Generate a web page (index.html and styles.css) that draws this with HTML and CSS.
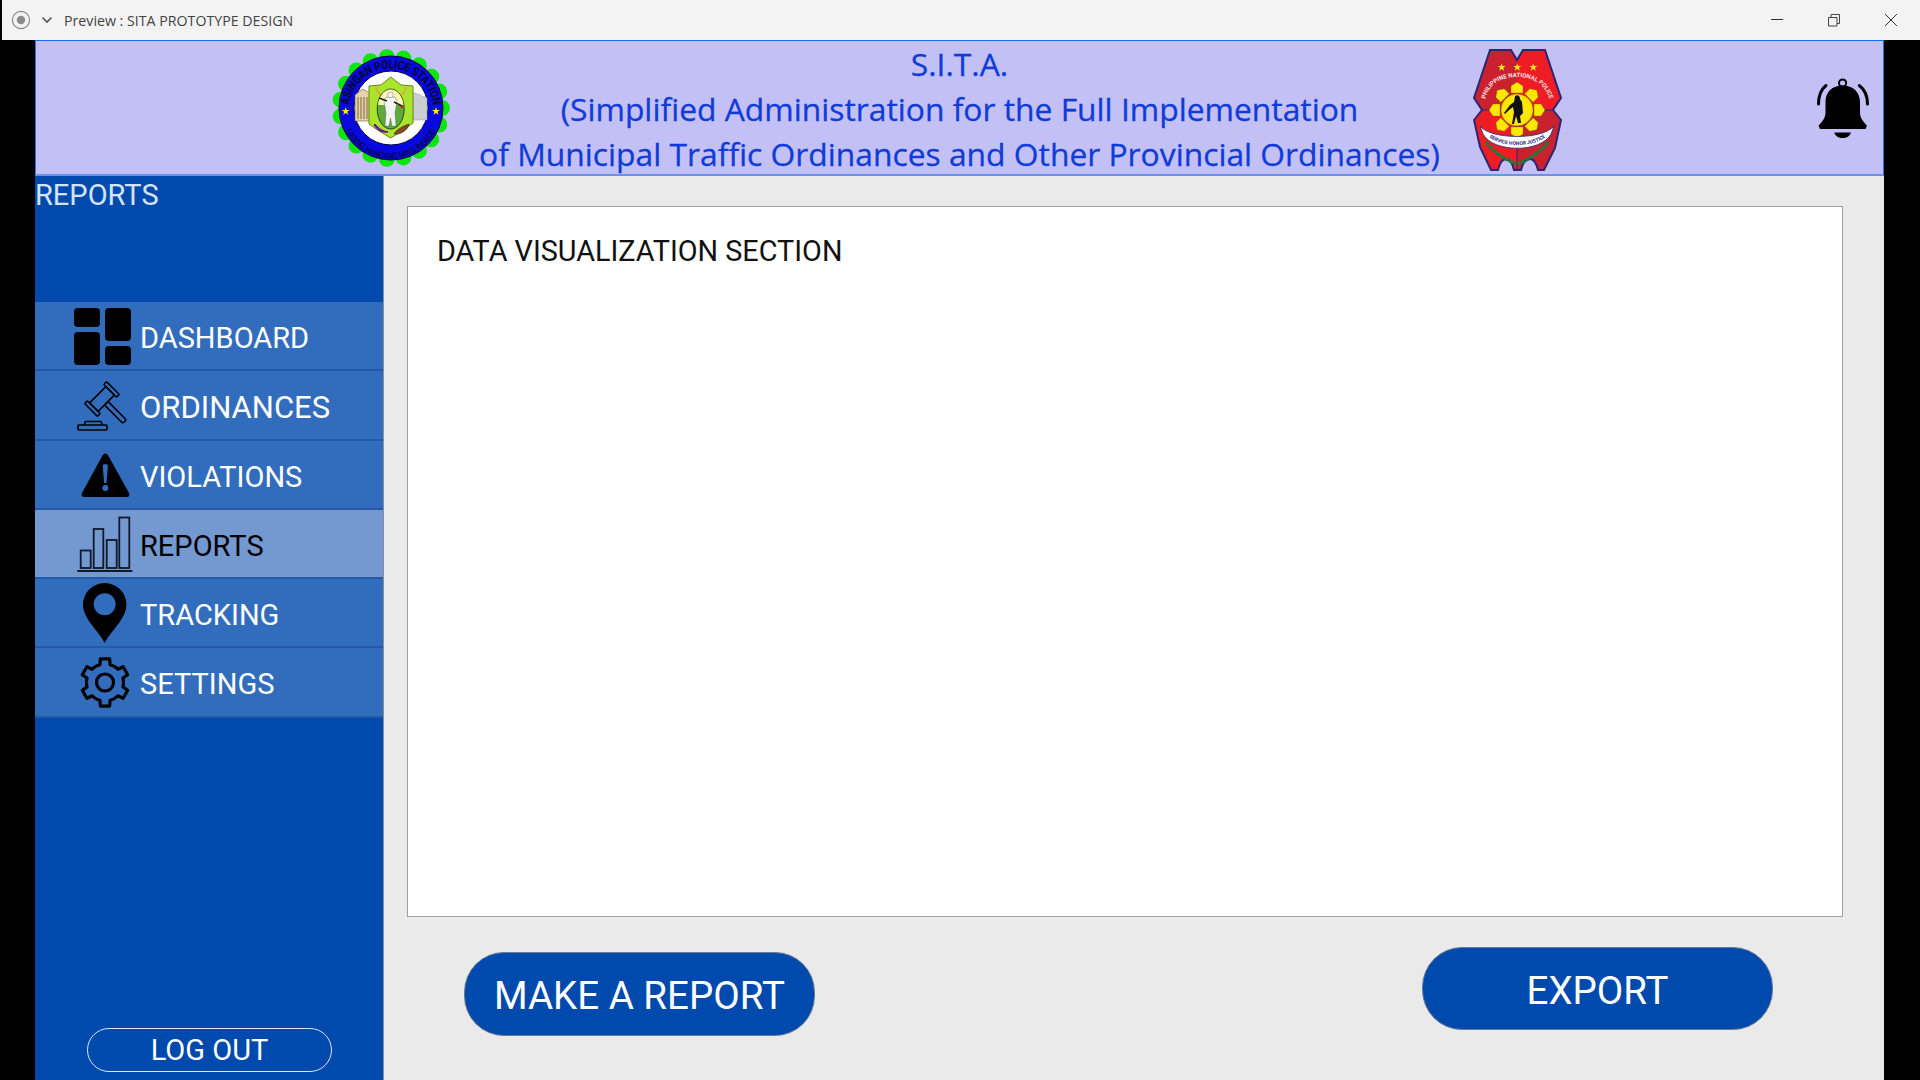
FILE: index.html
```
<!DOCTYPE html>
<html lang="en">
<head>
  <meta charset="UTF-8" />
  <title>Preview : SITA PROTOTYPE DESIGN</title>
  <link rel="stylesheet" href="styles.css">
</head>
<body>

<div class="titlebar">
  <svg class="rec-icon" width="20" height="20" viewBox="0 0 20 20"><circle cx="10" cy="10" r="8.6" fill="none" stroke="#8a8a8a" stroke-width="1.2"/><circle cx="10" cy="10" r="4.2" fill="#8a8a8a"/></svg>
  <svg class="chev-icon" width="12" height="8" viewBox="0 0 12 8"><path d="M1.5 1.5 6 6l4.500-4.500" fill="none" stroke="#555" stroke-width="1.6"/></svg>
  <span class="window-title">Preview : SITA PROTOTYPE DESIGN</span>
  <div class="window-btns">
    <div class="window-btn"><svg width="14" height="14" viewBox="0 0 14 14"><path d="M1 6.500h12" stroke="#333" stroke-width="1"/></svg></div>
    <div class="window-btn"><svg width="14" height="14" viewBox="0 0 14 14"><path d="M1.500 4.500h8.500v8.500H1.500zM4 4.500V1.500h8.500V10.500H10" fill="none" stroke="#444" stroke-width="1"/></svg></div>
    <div class="window-btn"><svg width="14" height="14" viewBox="0 0 14 14"><path d="M1 1l12 12M13 1 1 13" stroke="#333" stroke-width="1"/></svg></div>
  </div>
</div>

<div class="app">
  <header class="header">
    <div class="header-left">
      <!-- asingan police station seal -->
      <svg class="seal" width="118" height="118" viewBox="0 0 118 118">
        <defs>
          <path id="sealTop" d="M16.500 62A42.500 42.500 0 0 1 101.500 62"/>
          <path id="sealBottom" d="M9 60A50 50 0 0 0 109 60"/>
          <path id="sealStar" d="M0-4 1-1.200H4L1.600.5 2.500 3.500 0 1.700-2.500 3.500-1.600.5-4-1.200H-1Z"/>
        </defs>
        <circle cx="59" cy="59" r="51" fill="none" stroke="#0be60b" stroke-width="16" stroke-linecap="round" pathLength="19" stroke-dasharray="0 1"/>
        <circle cx="59" cy="59" r="52" fill="#0808e0" stroke="#06063a" stroke-width="1"/>
        <circle cx="59" cy="59" r="37" fill="#fff" stroke="#06063a" stroke-width="1"/>
        <text class="seal-top"><textPath href="#sealTop" startOffset="50%" text-anchor="middle" textLength="122" lengthAdjust="spacingAndGlyphs">ASINGAN POLICE STATION</textPath></text>
        <text class="seal-bottom"><textPath href="#sealBottom" startOffset="50%" text-anchor="middle" textLength="112" lengthAdjust="spacingAndGlyphs">LAGING HANDANG MAGLINGKOD</textPath></text>
        <use href="#sealStar" x="13.700" y="62.300" fill="#ffe81a"/>
        <use href="#sealStar" x="104" y="62.300" fill="#ffe81a"/>
        <path d="M23 72V46l7.500-6 7.500 4v28z" fill="#e8d3a8" stroke="#6b5a3a" stroke-width=".6"/>
        <path d="M26 48v22M29 48v22M32 48v22M35 48v22" stroke="#6b5a3a" stroke-width=".9"/>
        <path d="M80 43l8 3 7 3v22H80z" fill="#c9ced2" stroke="#8d9599" stroke-width=".5"/>
        <path d="M58.700 28 69 36l12 1v37L70 82l-11.300 7L47 82l-10-7V37l12-1z" fill="#a9e62b" stroke="#6d7f20" stroke-width="1"/>
        <path d="M44 38c1 4 3 7 5 8M74 38c-1 4-3 7-5 8" fill="none" stroke="#d8b03c" stroke-width="2"/>
        <ellipse cx="58.700" cy="60" rx="13.500" ry="20" fill="#5cab3b" stroke="#222" stroke-width=".8"/>
        <path d="M46 56c1-9 6-15.500 12.700-15.500S70.500 47 71.500 56z" fill="#fdf6b8"/>
        <path d="M54 48h9l2 4-2 12 1 13h-4l-1.500-8-1.500 8h-4l1-13-2-12z" fill="#f4f4f4" stroke="#555" stroke-width=".4"/>
        <circle cx="58.500" cy="46" r="2.800" fill="#f4f4f4" stroke="#555" stroke-width=".4"/>
        <path d="M47 49l8 3M62 53l8 4" stroke="#222" stroke-width="1.400"/>
        <circle cx="70" cy="58" r="1.400" fill="#d52020"/>
        <path d="M43 75c4 5 8 7 13 8-5 1-10-1-14-7z" fill="#7a1fa8" stroke="#5a1080" stroke-width="1"/>
        <path d="M62 85c3-5 9-8 15-10-1 6-8 11-15 10z" fill="#7d4a24" stroke="#3d2410" stroke-width=".6"/>
      </svg>
    </div>
    <div class="header-title">
      <div>S.I.T.A.</div>
      <div>(Simplified Administration for the Full Implementation</div>
      <div>of Municipal Traffic Ordinances and Other Provincial Ordinances)</div>
    </div>
    <div class="header-right">
      <!-- pnp badge -->
      <svg class="badge" width="89" height="123" viewBox="0 0 89 123">
        <defs>
          <path id="badgeArc" d="M12 52C15 34 30 28 44 28S73 34 77 52"/>
          <path id="ribbonArc" d="M12 84C24 100 64 100 77 84"/>
          <path id="badgeStar" d="M0-4 1-1.200H4L1.600.5 2.500 3.500 0 1.700-2.500 3.500-1.600.5-4-1.200H-1Z"/>
        </defs>
        <path d="M17 1H38L44 11 50 1H72L88 49 80 61 88 71 82 99 71 121H65C63 113 60 110 57 110 54 110 50 113 48 121H41C39 113 36 110 33 110 30 110 27 113 25 121H18L7 98 1 71 9 61 1 49Z" fill="#ee1c25"/>
        <path d="M17 1H38L44 11V61H9L1 49Z" fill="#c9222e"/>
        <path d="M44 61H80L88 71 82 99 71 121H65C63 113 60 110 57 110 54 110 50 113 48 121H44Z" fill="#c9222e"/>
        <path d="M17 1H38L44 11 50 1H72L88 49 80 61 88 71 82 99 71 121H65C63 113 60 110 57 110 54 110 50 113 48 121H41C39 113 36 110 33 110 30 110 27 113 25 121H18L7 98 1 71 9 61 1 49Z" fill="none" stroke="#2b2673" stroke-width="2"/>
        <path d="M9 61H80M44 61V121" stroke="#2b2673" stroke-width="1"/>
        <use href="#badgeStar" x="28.700" y="18.300" fill="#ffe81a"/>
        <use href="#badgeStar" x="44.300" y="18.300" fill="#ffe81a"/>
        <use href="#badgeStar" x="60.300" y="18.300" fill="#ffe81a"/>
        <text class="badge-top"><textPath href="#badgeArc" startOffset="50%" text-anchor="middle">PHILIPPINE NATIONAL POLICE</textPath></text>
        <g fill="#ffe800" stroke="#7a6a00" stroke-width=".4">
          <path id="ray" d="M38 44V37L44 33 50 37V44Z"/>
          <use href="#ray" transform="rotate(45 44 61)"/>
          <use href="#ray" transform="rotate(90 44 61)"/>
          <use href="#ray" transform="rotate(135 44 61)"/>
          <use href="#ray" transform="rotate(180 44 61)"/>
          <use href="#ray" transform="rotate(225 44 61)"/>
          <use href="#ray" transform="rotate(270 44 61)"/>
          <use href="#ray" transform="rotate(315 44 61)"/>
          <circle cx="44" cy="61" r="16"/>
        </g>
        <path d="M42 47c3-2 5 0 5 3l2 3 1 11-3 3 1 7h-3l-2-7-2 8h-2l2-12-1-5-4 3-4 4-1-1 6-8 4-3z" fill="#111"/>
        <path d="M13 93C20 103 32 110 43 115M75 93C68 103 56 110 45 115" fill="none" stroke="#1f7a3a" stroke-width="3.500" stroke-dasharray="4 1"/>
        <path d="M7 77C18 91 70 91 81 77L78 85C68 104 20 104 10 85Z" fill="#fff" stroke="#2b2673" stroke-width=".8"/>
        <text class="badge-ribbon"><textPath href="#ribbonArc" startOffset="50%" text-anchor="middle">SERVICE HONOR JUSTICE</textPath></text>
      </svg>
      <svg class="bell" width="53" height="60" viewBox="0 0 53 60">
        <circle cx="25.600" cy="5" r="3.600" fill="none" stroke="#000" stroke-width="2"/>
        <path d="M25.600 7.500C15 7.500 8.500 14 8.500 24V35C8.500 40 5 44 1.600 47.700L3 51H48.500L50 47.700C46.500 44 43 40 43 35V24C43 14 36 7.500 25.600 7.500Z" fill="#000"/>
        <path d="M17.300 54.400H34C33 58 29.500 60 25.600 60S18.300 58 17.300 54.400Z" fill="#000"/>
        <path d="M9 7.500C4 11.500 1.500 18 1.500 26M42.300 7.500C47.500 11.500 50.500 18 50.500 26" fill="none" stroke="#000" stroke-width="3" stroke-linecap="round"/>
      </svg>
    </div>
  </header>

  <div class="content">
    <aside class="sidebar">
      <div class="sidebar-title">REPORTS</div>
      <nav class="nav">
        <div class="nav-item">
          <svg width="60" height="60" viewBox="0 0 60 60"><g fill="#000"><rect x="0" y="2" width="26" height="19" rx="4"/><rect x="0" y="26" width="26" height="33" rx="4"/><rect x="31" y="2" width="26" height="33" rx="4"/><rect x="31" y="40" width="26" height="19" rx="4"/></g></svg>
          <span>DASHBOARD</span>
        </div>
        <div class="nav-item wide">
          <svg width="60" height="60" viewBox="0 0 60 60"><g fill="none" stroke="#000" stroke-width="1.600" stroke-linejoin="round"><g transform="translate(28 24) rotate(-45)"><rect x="-11.500" y="-6" width="23" height="12"/><rect x="-15.500" y="-9" width="4" height="18" rx="1"/><rect x="11.500" y="-9" width="4" height="18" rx="1"/><rect x="-2.500" y="6" width="5" height="26" rx="2"/></g><path d="M10 50 11.500 46.500H27L28.500 50"/><rect x="4" y="50" width="29" height="5" rx="1"/></g></svg>
          <span>ORDINANCES</span>
        </div>
        <div class="nav-item">
          <svg width="60" height="60" viewBox="0 0 60 60"><path d="M31.300 9.500C30 9.500 29 10.500 28.200 12L8 49C7 51 8 53 10 53H53C55 53 56 51 55 49L34.500 12C33.700 10.500 32.600 9.500 31.300 9.500Z" fill="#000"/><path d="M28.700 21.500C28.700 19.800 33.900 19.800 33.900 21.500L32.500 39H30.100Z" fill="#326dbd"/><circle cx="31.300" cy="44" r="2.900" fill="#326dbd"/></svg>
          <span>VIOLATIONS</span>
        </div>
        <div class="nav-item active">
          <svg width="60" height="60" viewBox="0 0 60 60"><g fill="none" stroke="#10182a" stroke-width="1.800"><rect x="6.700" y="37.500" width="10" height="17.500"/><rect x="19.700" y="16" width="9.600" height="39"/><rect x="32.700" y="27" width="10" height="28"/><rect x="45.300" y="4.500" width="10" height="50.500"/><path d="M3.300 58H58.300"/></g></svg>
          <span>REPORTS</span>
        </div>
        <div class="nav-item">
          <svg width="60" height="60" viewBox="0 0 60 60"><path fill="#000" fill-rule="evenodd" d="M30.700 60C25 48 9 36 9 21.700A21.700 21.700 0 1 1 52.400 21.700C52.400 36 36.500 48 30.700 60ZM30.700 10.300A11 11 0 1 0 30.700 32.300 11 11 0 1 0 30.700 10.300Z"/></svg>
          <span>TRACKING</span>
        </div>
        <div class="nav-item">
          <svg width="60" height="60" viewBox="0 0 60 60">
            <defs><path id="cog" d="M-9.250-16.020A18.500 18.500 0 0 1-5.100-17.780L-4.580-23.560H4.580L5.100-17.780A18.500 18.500 0 0 1 9.250-16.020"/></defs>
            <g transform="translate(31 30.500)" fill="none" stroke="#000" stroke-width="3.200" stroke-linejoin="round">
              <use href="#cog"/>
              <use href="#cog" transform="rotate(60)"/>
              <use href="#cog" transform="rotate(120)"/>
              <use href="#cog" transform="rotate(180)"/>
              <use href="#cog" transform="rotate(240)"/>
              <use href="#cog" transform="rotate(300)"/>
              <circle r="8.500"/>
            </g>
          </svg>
          <span>SETTINGS</span>
        </div>
      </nav>
      <button class="logout">LOG OUT</button>
    </aside>

    <main class="main">
      <section class="panel">DATA VISUALIZATION SECTION</section>
      <div class="actions">
        <button class="pill-btn make-report">MAKE A REPORT</button>
        <button class="pill-btn">EXPORT</button>
      </div>
    </main>
  </div>
</div>

</body>
</html>
```

FILE: styles.css
```
html, body {
  margin: 0; padding: 0; height: 100%;
  background: #000;
  font-family: Roboto, Arial, sans-serif;
  overflow: hidden;
}
body {
  display: flex; flex-direction: column; height: 100vh;
}
.titlebar {
  height: 40px;
  margin-left: 2px;
  background: #f3f3f3;
  display: flex;
  align-items: center;
  padding-left: 9px;
  flex-shrink: 0;
}
.chev-icon { margin-left: 10px; }
.window-title {
  margin-left: 11px;
  font-family: "Open Sans", sans-serif;
  font-size: 14.2px;
  color: #444;
}
.window-btns { margin-left: auto; display: flex; padding-right: 1px; }
.window-btn {
  width: 57px;
  height: 40px;
  display: flex;
  align-items: center;
  justify-content: center;
}
.app {
  flex-grow: 1;
  margin: 0 36px 0 35px;
  display: flex;
  flex-direction: column;
  min-height: 0;
}
.header {
  height: 136px;
  box-sizing: border-box;
  background: #c3c0f6;
  border-top: 1px solid #0a6cff;
  border-left: 1px solid #2f74e8;
  border-right: 1px solid #2f74e8;
  border-bottom: 2px solid #6b93ea;
  display: grid;
  grid-template-columns: 1fr auto 1fr;
  align-items: center;
  flex-shrink: 0;
}
.header-left { display: flex; justify-content: flex-end; padding-right: 29px; }
.header-right { display: flex; align-items: center; padding-left: 33px; padding-right: 13px; }
.badge { margin-top: 6px; }
.bell { margin-left: auto; margin-top: 1px; }
.header-title {
  height: 133px;
  box-sizing: border-box;
  font-family: "Open Sans", "Noto Sans", sans-serif;
  font-size: 31.8px;
  line-height: 45px;
  color: #0f3bd8;
  -webkit-text-stroke: 0.3px #0f3bd8;
  text-align: center;
  white-space: nowrap;
}
.seal-top { font: 700 12px Roboto, sans-serif; fill: #05052a; }
.seal-bottom { font: 400 9px Roboto, sans-serif; fill: #05052a; }
.badge-top { font: 700 6px Roboto, sans-serif; fill: #ffe3e3; }
.badge-ribbon { font: 700 5px Roboto, sans-serif; fill: #2b2673; }
.content { flex-grow: 1; display: flex; min-height: 0; }
.sidebar {
  width: 349px;
  box-sizing: border-box;
  flex-shrink: 0;
  background: #004aad;
  border-right: 1px solid #8a8f99;
  display: flex;
  flex-direction: column;
}
.sidebar-title {
  height: 126px;
  flex-shrink: 0;
  padding-top: 2px;
  box-sizing: border-box;
  font-size: 29px;
  line-height: 34px;
  color: #d5e3ff;
}
.nav-item {
  height: 69.25px;
  box-sizing: border-box;
  background: #326dbd;
  border-bottom: 2px solid #2559a8;
  display: flex;
  align-items: center;
  gap: 6px;
  padding-left: 39px;
  color: #fff;
  font-size: 29px;
}
.nav-item span { margin-top: 5px; }
.nav-item.wide { font-size: 31px; }
.nav-item.active { background: #7399d0; color: #000; }
.nav-item svg { overflow: visible; flex-shrink: 0; }
.logout {
  margin: auto 0 8px 52px;
  width: 245px;
  height: 44px;
  background: transparent;
  border: 1px solid #dbe6ff;
  border-radius: 22px;
  color: #fff;
  font-family: Roboto, sans-serif;
  font-size: 29px;
  padding: 0;
}
.main {
  flex-grow: 1;
  background: #eaeaea;
  padding: 30px 41px 0 23px;
  min-width: 0;
}
.panel {
  height: 711px;
  box-sizing: border-box;
  background: #fff;
  border: 1px solid #a0a0a0;
  padding: 27px 29px;
  font-size: 28.8px;
  line-height: 34px;
  color: #111;
}
.actions {
  display: flex;
  justify-content: space-between;
  align-items: flex-start;
  margin-top: 30px;
  padding: 0 70px 0 57px;
}
.pill-btn {
  width: 351px;
  height: 83px;
  background: #004aad;
  border: 1px solid #6b7a94;
  border-radius: 40px;
  color: #fff;
  font-family: Roboto, sans-serif;
  font-size: 38.5px;
  padding: 4px 0 0;
}
.make-report { margin-top: 5px; height: 84px; padding-top: 2px; }
```
